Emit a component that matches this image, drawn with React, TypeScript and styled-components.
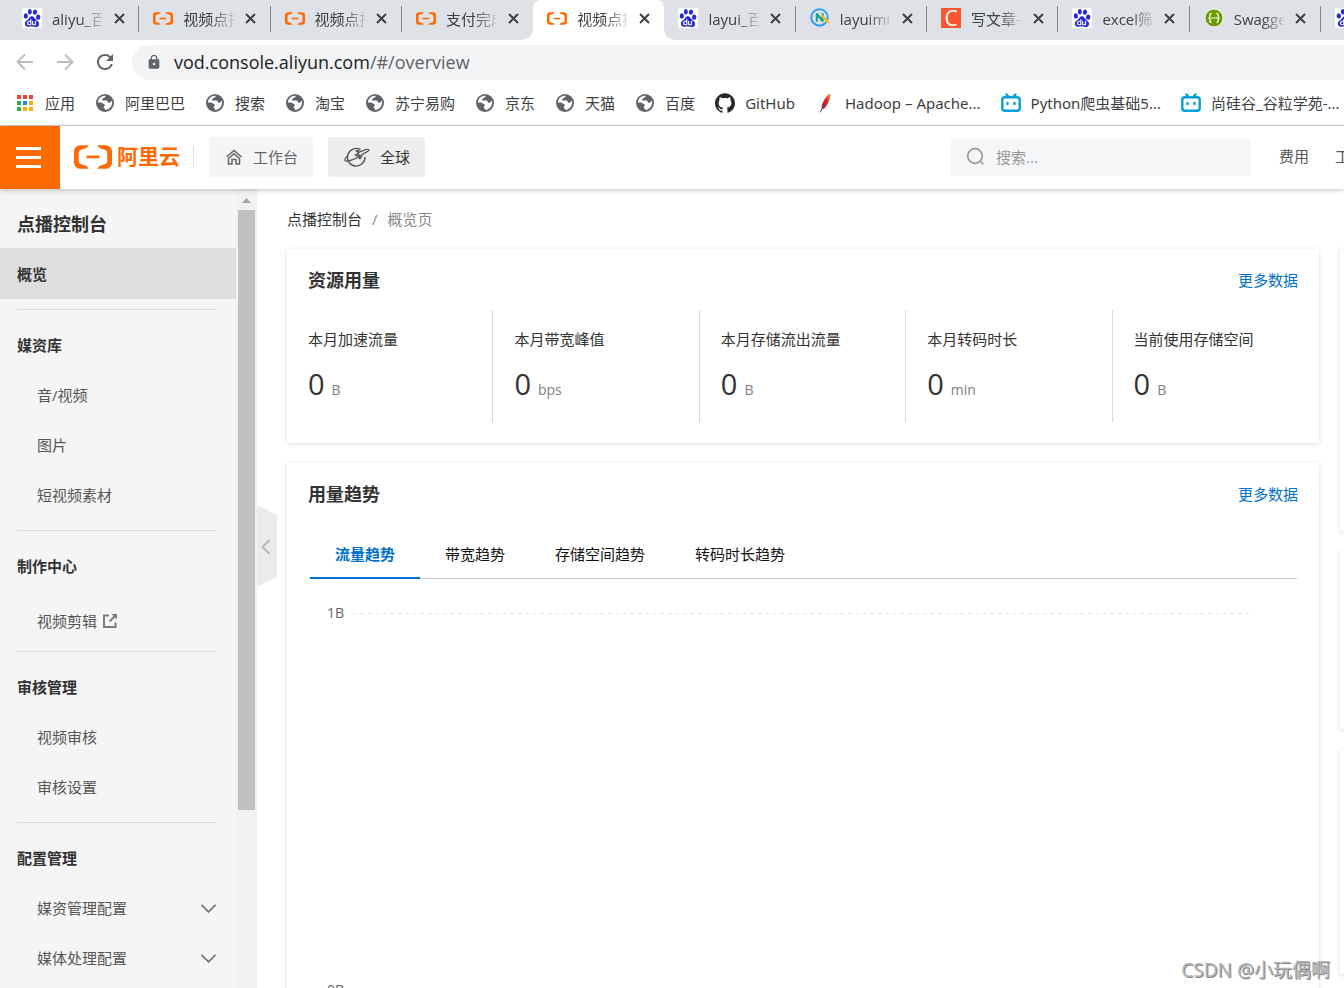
import React from 'react';
import styled, { createGlobalStyle, css } from 'styled-components';
import { MdLock, MdRefresh } from 'react-icons/md';
import { SiBaidu, SiGithub } from 'react-icons/si';

const sans = '"Open Sans", "Noto Sans CJK SC", sans-serif';
const wideSans = '"Noto Sans", "Noto Sans CJK SC", sans-serif';
const orange = '#ff6a00';

const GlobalStyle = createGlobalStyle`
  *, *::before, *::after { box-sizing: border-box; }
  body { margin: 0; background: #fff; color: #333; font-family: ${sans}; font-size: 15px; line-height: 20px; }
  button, input { font: inherit; color: inherit; border: 0; padding: 0; background: none; }
  button { cursor: pointer; }
  a { color: inherit; text-decoration: none; }
  ul { list-style: none; margin: 0; padding: 0; }
  h1, h2, h3, p { margin: 0; font-size: inherit; }
  svg { display: block; flex: none; }
`;

/* ---------- shell ---------- */

const Shell = styled.div`
  position: relative;
  display: flex;
  flex-direction: column;
  height: 100vh;
  overflow: hidden;
`;

const Workspace = styled.div`
  display: flex;
  flex: 1;
  min-height: 0;
`;

/* ---------- browser frame ---------- */

const TabStrip = styled.div`
  display: flex;
  height: 40px;
  padding-left: 8px;
  background: #dee1e6;
  overflow: hidden;
`;

const flare = css`
  content: '';
  position: absolute;
  bottom: 0;
  width: 10px;
  height: 10px;
`;

const BrowserTab = styled.div<{ $active?: boolean; $divided?: boolean; $stub?: boolean }>`
  position: relative;
  display: flex;
  align-items: center;
  gap: 10px;
  flex: ${p => (p.$stub ? '0 0 23px' : '1 1 0')};
  min-width: 0;
  height: 40px;
  padding: ${p => (p.$stub ? '0 0 4px 14px' : '0 13px 4px 14px')};
  color: #3c4043;
  ${p => p.$divided && css`
    background: linear-gradient(#85888d, #85888d) right 6px / 1px 26px no-repeat;
  `}
  ${p => p.$active && css`
    background: #fff;
    border-radius: 8px 8px 0 0;
    &::before { ${flare} left: -10px; background: radial-gradient(circle at 0 0, transparent 9px, #fff 10px); }
    &::after { ${flare} right: -10px; background: radial-gradient(circle at 100% 0, transparent 9px, #fff 10px); }
  `}
`;

const TabTitle = styled.span`
  flex: 1;
  min-width: 0;
  overflow: hidden;
  white-space: nowrap;
  padding-top: 2px;
  mask-image: linear-gradient(to right, #000 28px, transparent 54px);
`;

const CloseButton = styled.button`
  display: flex;
  align-items: center;
  justify-content: center;
  width: 14px;
  height: 20px;
  color: #3c4043;
`;

const IconSlot = styled.span`
  display: flex;
  align-items: center;
  justify-content: center;
  flex: none;
  width: 20px;
  height: 20px;
`;

const BaiduTile = styled(IconSlot)`
  border-radius: 2px;
  background: #fff;
  color: #2529d8;
`;

const LetterTile = styled(IconSlot)`
  background: #fc5531;
  color: #fff;
  font-size: 21px;
`;

const Toolbar = styled.div`
  display: flex;
  align-items: center;
  height: 44px;
  padding-left: 15px;
`;

const ToolButton = styled.button<{ $muted?: boolean }>`
  display: flex;
  align-items: center;
  justify-content: center;
  width: 20px;
  height: 32px;
  margin-right: 20px;
  color: ${p => (p.$muted ? '#babcbe' : '#5f6368')};
`;

const AddressBar = styled.div`
  display: flex;
  align-items: center;
  gap: 12px;
  flex: 1;
  height: 35px;
  margin-left: -3px;
  padding-left: 14px;
  border-radius: 18px 0 0 18px;
  background: #f1f3f4;
  color: #5f6368;
`;

const Address = styled.p`
  font-size: 18px;
  line-height: 26px;
  strong { font-weight: 400; color: #202124; }
`;

const BookmarkBar = styled.nav`
  display: flex;
  align-items: center;
  gap: 20px;
  height: 42px;
  padding: 0 0 3px 15px;
  border-bottom: 1px solid #d6d6d6;
  font-family: ${wideSans};
  overflow: hidden;
`;

const Bookmark = styled.a`
  display: flex;
  align-items: center;
  gap: 10px;
  flex: none;
  color: #3c4043;
  white-space: nowrap;
`;

/* ---------- console header ---------- */

const Header = styled.header`
  position: relative;
  z-index: 2;
  display: flex;
  align-items: center;
  flex: none;
  height: 63px;
  padding-bottom: 1px;
  background: #fff;
  box-shadow: 0 1px 5px rgba(0, 0, 0, 0.25);
`;

const MenuButton = styled.button`
  display: flex;
  flex-direction: column;
  align-items: center;
  justify-content: center;
  gap: 6px;
  width: 60px;
  height: 63px;
  margin-bottom: -1px;
  padding-right: 3px;
  background: ${orange};
`;

const MenuBar = styled.span`
  width: 25px;
  height: 3px;
  background: #fff;
`;

const Brand = styled.a`
  display: flex;
  align-items: center;
  gap: 5px;
  height: 22px;
  margin-left: 14px;
  padding-right: 13px;
  border-right: 1px solid #dedede;
  color: ${orange};
  font-size: 21px;
  font-weight: 700;
  line-height: 20px;
`;

const BrandName = styled.span`
  height: 22px;
`;

const HeaderButton = styled.button<{ $strong?: boolean }>`
  display: flex;
  align-items: center;
  gap: 9px;
  height: 40px;
  margin-left: 15px;
  padding: 0 15px;
  border-radius: 3px;
  background: ${p => (p.$strong ? '#ededed' : '#f4f5f7')};
  color: ${p => (p.$strong ? '#333' : '#666')};
`;

const SearchBox = styled.label`
  display: flex;
  align-items: center;
  gap: 10px;
  width: 300px;
  height: 37px;
  margin-left: auto;
  padding-left: 15px;
  background: #f4f6f7;
  color: #999;
`;

const SearchInput = styled.input`
  flex: 1;
  min-width: 0;
  outline: none;
  &::placeholder { color: #999; opacity: 1; }
`;

const HeaderLinks = styled.nav`
  display: flex;
  gap: 26px;
  width: 93px;
  padding: 0 0 2px 28px;
  overflow: hidden;
  white-space: nowrap;
  color: #555;
`;

/* ---------- sidebar ---------- */

const Sidebar = styled.aside`
  position: relative;
  display: flex;
  flex: none;
  width: 257px;
  background: #f5f5f5;
`;

const SideNav = styled.nav`
  flex: 1;
  overflow: hidden;
`;

const SideTitle = styled.h1`
  height: 59px;
  padding: 23px 17px 0;
  font-size: 18px;
  line-height: 24px;
`;

const SideCurrent = styled.a`
  display: block;
  height: 51px;
  margin-bottom: 10px;
  padding: 0 17px;
  background: #dedede;
  font-weight: 700;
  line-height: 52px;
`;

const SideGroup = styled.section`
  margin: 0 20px 0 17px;
  padding: 10px 0;
  border-top: 1px solid #dedede;
`;

const SideHeading = styled.h2`
  font-weight: 700;
  line-height: 50px;
`;

const SideItem = styled.a<{ $external?: boolean }>`
  display: flex;
  align-items: center;
  justify-content: ${p => (p.$external ? 'flex-start' : 'space-between')};
  gap: 6px;
  height: 50px;
  padding: ${p => (p.$external ? '10px 0 0 20px' : '0 0 0 20px')};
  color: #555;
`;

const ScrollTrack = styled.div`
  display: flex;
  flex-direction: column;
  align-items: center;
  width: 21px;
  padding-top: 9px;
  background: #f1f1f1;
`;

const ScrollThumb = styled.div`
  width: 17px;
  height: 76%;
  margin-top: 7px;
  background: #c1c1c1;
`;

const CollapseHandle = styled.button`
  position: absolute;
  z-index: 1;
  left: 100%;
  top: 316px;
  display: flex;
  align-items: center;
  padding: 2px 0 0 4px;
  width: 20px;
  height: 82px;
  background: #ebebeb;
  color: #b5b5b5;
  clip-path: polygon(0 0, 100% 10px, 100% 72px, 0 100%);
`;

/* ---------- content ---------- */

const Main = styled.main`
  flex: 1;
  min-width: 0;
  padding: 20px 0 0 30px;
  overflow: hidden;
`;

const Breadcrumb = styled.nav`
  display: flex;
  gap: 10px;
  margin-bottom: 20px;
  color: #888;
  a { color: #333; }
`;

const Columns = styled.div`
  display: grid;
  grid-template-columns: minmax(0, 1fr) 4px;
  gap: 21px;
`;

const Stack = styled.div`
  display: flex;
  flex-direction: column;
  gap: 20px;
`;

const Card = styled.section`
  background: #fff;
  box-shadow: 0 1px 5px rgba(0, 0, 0, 0.14);
`;

const SideCard = styled(Card)<{ $height: number }>`
  width: 300px;
  height: ${p => p.$height}px;
`;

const CardHead = styled.div`
  display: flex;
  align-items: center;
  justify-content: space-between;
  height: 61px;
  padding: 0 21px;
`;

const CardTitle = styled.h2`
  font-size: 18px;
  line-height: 24px;
`;

const MoreLink = styled.a`
  color: #0070cc;
`;

const Stats = styled.div`
  display: grid;
  grid-template-columns: repeat(5, minmax(0, 1fr));
  padding-bottom: 21px;
`;

const Stat = styled.div`
  height: 112px;
  padding: 19px 0 0 21px;
  &:not(:last-child) { border-right: 1px solid #d9d9d9; }
`;

const StatValue = styled.p`
  display: flex;
  align-items: baseline;
  gap: 7px;
  margin-top: 17px;
  font-size: 29px;
  line-height: 36px;
`;

const Unit = styled.span`
  font-size: 14px;
  color: #808080;
`;

const TrendTabs = styled.div`
  display: flex;
  margin: 7px 22px 0;
  padding-left: 1px;
  border-bottom: 1px solid #c8c8c8;
`;

const TrendTab = styled.button<{ $active?: boolean }>`
  height: 48px;
  margin-bottom: -1px;
  padding: 0 25px;
  border-bottom: 2px solid ${p => (p.$active ? '#0070cc' : 'transparent')};
  color: ${p => (p.$active ? '#0070cc' : '#111')};
  font-weight: ${p => (p.$active ? 700 : 400)};
`;

const Chart = styled.div`
  display: flex;
  flex-direction: column;
  gap: 357px;
  padding: 24px 69px 20px 40px;
`;

const ChartRow = styled.div`
  display: flex;
  align-items: center;
  gap: 9px;
  color: #666;
  font-size: 14px;
`;

const GridLine = styled.svg`
  flex: 1;
  min-width: 0;
  height: 1px;
`;

const Watermark = styled.p`
  position: absolute;
  z-index: 3;
  right: 14px;
  bottom: 6px;
  color: #b4b4b4;
  font-family: ${wideSans};
  font-size: 19px;
  line-height: 24px;
  text-shadow: 1px 1px 0 #858585;
`;

/* ---------- icons ---------- */

const AliyunMark = ({ width }: { width: number }) => (
  <svg width={width} height={Math.round(width * 0.625)} viewBox="0 4.5 24 15" fill={orange}>
    <path d="M3.996 4.517h5.291L8.01 6.324 4.153 7.506a1.668 1.668 0 0 0-1.165 1.601v5.786a1.668 1.668 0 0 0 1.165 1.6l3.857 1.183 1.277 1.807H3.996A3.996 3.996 0 0 1 0 15.487V8.513a3.996 3.996 0 0 1 3.996-3.996m16.008 0h-5.291l1.272 1.807 3.857 1.182c.715.227 1.17.889 1.165 1.601v5.786a1.668 1.668 0 0 1-1.165 1.6l-3.857 1.183-1.272 1.807h5.291A3.996 3.996 0 0 0 24 15.487V8.513a3.996 3.996 0 0 0-3.996-3.996m-4.007 8.345H8.002v-1.804h7.995Z" />
  </svg>
);

const CloseIcon = () => (
  <svg width="11" height="11" viewBox="0 0 11 11" stroke="currentColor" strokeWidth="2">
    <path d="M1 1l9 9M10 1l-9 9" />
  </svg>
);

const LayuiIcon = () => (
  <svg width="20" height="20" viewBox="0 0 19 19" fill="none">
    <circle cx="9" cy="9" r="7.8" stroke="#2e9df7" strokeWidth="1.8" />
    <path d="M5.500 13V5h2l3.500 4.500V5h2v8h-2L7.500 8.500V13z" fill="#17a58c" />
    <path d="M10 4.500l9 9.500-3 .5-4-5z" fill="#fbb917" />
  </svg>
);

const SwaggerIcon = () => (
  <svg width="20" height="20" viewBox="0 0 20 20" fill="none">
    <circle cx="10" cy="10" r="9" fill="#6d9a00" stroke="#f3f7e8" strokeWidth="1" />
    <path d="M7.500 5.500c-2 0-1.500 1-1.500 2.500S5.500 10 4.500 10c1 0 1.500.5 1.500 2s-.5 2.500 1.500 2.500M12.500 5.500c2 0 1.500 1 1.500 2.500s.5 2 1.500 2c-1 0-1.500.5-1.500 2s.5 2.500-1.500 2.500" stroke="#fff" strokeWidth="1.300" />
    <path d="M7.300 10h1.400M9.400 10h1.400M11.500 10h1.400" stroke="#fff" strokeWidth="1.400" />
  </svg>
);

const BackIcon = ({ flip }: { flip?: boolean }) => (
  <svg width="18" height="18" viewBox="0 0 18 18" fill="none" stroke="currentColor" strokeWidth="2">
    <path d={flip ? 'M1 9h15M9 1.500L16.500 9 9 16.500' : 'M17 9H2M9 1.500L1.500 9 9 16.500'} />
  </svg>
);

const AppsIcon = () => {
  const colors = ['#ea4335', '#ea4335', '#ea4335', '#34a853', '#1a8cff', '#fbaf00', '#34a853', '#fbaf00', '#fbaf00'];
  return (
    <svg width="18" height="18" viewBox="0 0 18 18">
      {colors.map((c, i) => (
        <rect key={i} x={1 + (i % 3) * 6} y={1 + Math.floor(i / 3) * 6} width="4" height="4" fill={c} />
      ))}
    </svg>
  );
};

const GlobeIcon = () => (
  <svg width="18" height="18" viewBox="0 0 18 18">
    <circle cx="9" cy="9" r="9" fill="#5f6368" />
    <path d="M1.800 8.500c.2-2.500 1.700-4.800 4-6 1-.5 2.600-.9 4-.8-.2 1.200-.8 1.800-2 2.100-.7.200-.7 1.200-1.400 1.500-.5.300-.4.900 0 1.200h3.800c1.300.2 1.700 1.100 1.800 2 .8.500 2.300.3 2.600-.6.200-.7.900-1 1.500-.8.400 2.500-.5 5.100-2.300 6.900-1.300 1.200-3 1.900-4.800 2 .1-1.100-.2-1.700-1-2.100-.6-.4-.3-1.400.3-1.900.8-.6.800-1.300-.1-1.700C6.700 9.700 6.600 8.700 5 8.600c-1-.1-2.200 0-3.200-.1z" fill="#fff" />
    <path d="M10.200 1.800c.8 1.100 2.400.9 2.300 2.500 0 1-.9 1.100-.8 2 .1 1.200 1.300 1.800 2.300 1.200l2.300-1.200C15.600 3.800 13.200 2 10.200 1.800z" fill="#5f6368" />
  </svg>
);

const FeatherIcon = () => (
  <svg width="18" height="20" viewBox="0 0 18 20">
    <defs>
      <linearGradient id="feather" x1="1" y1="0" x2="0" y2="1">
        <stop offset="0" stopColor="#f69923" />
        <stop offset="0.4" stopColor="#d22128" />
        <stop offset="1" stopColor="#6d2c91" />
      </linearGradient>
    </defs>
    <path d="M13 1c1.500 0 1.700 1.600 1 4-1 3.500-3 7.500-5.500 10.500L6.500 16l-2 3.500-.7-.3L5.700 15c-.4-2 .6-5.200 2.800-8.500C10.500 3.500 12 1.500 13 1z" fill="url(#feather)" />
  </svg>
);

const BiliIcon = () => (
  <svg width="20" height="20" viewBox="0 0 20 20" fill="none" stroke="#00a1d6" strokeWidth="2.400" strokeLinecap="round">
    <path d="M5.500 1.500l2.300 2.500M14.500 1.500l-2.300 2.500" />
    <rect x="1.300" y="4.300" width="17.400" height="13.500" rx="2.500" />
    <path d="M6.500 10v1M13.500 10v1" />
  </svg>
);

const HomeIcon = () => (
  <svg width="18" height="16" viewBox="0 0 18 16" fill="none" stroke="currentColor" strokeWidth="1.500">
    <path d="M1.500 8L9 1.500 16.500 8" />
    <path d="M3.500 9.500L9 4.800l5.500 4.700V15H11v-4.500H7V15H3.500z" />
  </svg>
);

const PlanetIcon = () => (
  <svg width="28" height="22" viewBox="0 0 28 22" fill="none" stroke="#555" strokeWidth="1.300">
    <path d="M17.500 3.600A8.800 8.800 0 1 0 22 11" />
    <path d="M5.200 9.200C2.500 11.800 1.300 13.500 2 14.500c1.500 1.700 10-1.200 16-5" />
    <path d="M14 4.300l4.500 1.300 2.800-1.600c1.700-.8 4.200-.9 4.700-.1-.2 1.300-2.500 2.200-4 2.900l-2.500 1.500-2 4-1.300.2.500-3.500-3.500.7-.8-.6 3.600-2.300-2.800-1.700z" />
  </svg>
);

const SearchIcon = () => (
  <svg width="20" height="20" viewBox="0 0 20 20" fill="none" stroke="currentColor" strokeWidth="1.700">
    <circle cx="9" cy="9" r="7.300" />
    <path d="M14 14l3.300 3.500" />
  </svg>
);

const ExternalIcon = () => (
  <svg width="14" height="14" viewBox="0 0 14 14" fill="none" stroke="#7d7d7d" strokeWidth="2">
    <path d="M6 1.500H1V13h11.500V8.500M6.500 7.500L12 2" />
    <path d="M8.500 0H14v5.500z" fill="#7d7d7d" stroke="none" />
  </svg>
);

const ChevronDown = () => (
  <svg width="15" height="9" viewBox="0 0 15 9" fill="none" stroke="#6e6e6e" strokeWidth="1.600">
    <path d="M.5.800l7 7 7-7" />
  </svg>
);

const ChevronLeft = () => (
  <svg width="10" height="16" viewBox="0 0 10 16" fill="none" stroke="currentColor" strokeWidth="1.800">
    <path d="M8.500 1L1.500 8l7 7" />
  </svg>
);

const BaiduIcon = () => <BaiduTile><SiBaidu size={18} /></BaiduTile>;

/* ---------- data ---------- */

const tabs: { icon: React.ReactNode; title: string; active?: boolean; divided?: boolean }[] = [
  { icon: <BaiduIcon />, title: 'aliyu_百', divided: true },
  { icon: <AliyunMark width={20} />, title: '视频点播', divided: true },
  { icon: <AliyunMark width={20} />, title: '视频点播', divided: true },
  { icon: <AliyunMark width={20} />, title: '支付完成' },
  { icon: <AliyunMark width={20} />, title: '视频点播', active: true },
  { icon: <BaiduIcon />, title: 'layui_百', divided: true },
  { icon: <IconSlot><LayuiIcon /></IconSlot>, title: 'layuimini', divided: true },
  { icon: <LetterTile>C</LetterTile>, title: '写文章-', divided: true },
  { icon: <BaiduIcon />, title: 'excel筛', divided: true },
  { icon: <SwaggerIcon />, title: 'Swagger', divided: true },
];

const bookmarks: { icon: React.ReactNode; label: string }[] = [
  { icon: <AppsIcon />, label: '应用' },
  ...['阿里巴巴', '搜索', '淘宝', '苏宁易购', '京东', '天猫', '百度'].map(label => ({ icon: <GlobeIcon />, label })),
  { icon: <SiGithub size={20} color="#24292e" />, label: 'GitHub' },
  { icon: <FeatherIcon />, label: 'Hadoop – Apache...' },
  { icon: <BiliIcon />, label: 'Python爬虫基础5...' },
  { icon: <BiliIcon />, label: '尚硅谷_谷粒学苑-...' },
];

const groups: { heading: string; items: { label: string; external?: boolean; expandable?: boolean }[] }[] = [
  { heading: '媒资库', items: [{ label: '音/视频' }, { label: '图片' }, { label: '短视频素材' }] },
  { heading: '制作中心', items: [{ label: '视频剪辑', external: true }] },
  { heading: '审核管理', items: [{ label: '视频审核' }, { label: '审核设置' }] },
  { heading: '配置管理', items: [{ label: '媒资管理配置', expandable: true }, { label: '媒体处理配置', expandable: true }] },
];

const stats = [
  { label: '本月加速流量', unit: 'B' },
  { label: '本月带宽峰值', unit: 'bps' },
  { label: '本月存储流出流量', unit: 'B' },
  { label: '本月转码时长', unit: 'min' },
  { label: '当前使用存储空间', unit: 'B' },
];

const trends = ['流量趋势', '带宽趋势', '存储空间趋势', '转码时长趋势'];

/* ---------- page ---------- */

export default function App() {
  return (
    <Shell>
      <GlobalStyle />
      <TabStrip>
        {tabs.map((t, i) => (
          <BrowserTab key={i} $active={t.active} $divided={t.divided}>
            {t.icon}
            <TabTitle>{t.title}</TabTitle>
            <CloseButton aria-label="关闭"><CloseIcon /></CloseButton>
          </BrowserTab>
        ))}
        <BrowserTab $stub><BaiduIcon /></BrowserTab>
      </TabStrip>
      <Toolbar>
        <ToolButton $muted aria-label="后退"><BackIcon /></ToolButton>
        <ToolButton $muted aria-label="前进"><BackIcon flip /></ToolButton>
        <ToolButton aria-label="刷新"><MdRefresh size={24} /></ToolButton>
        <AddressBar>
          <MdLock size={16} />
          <Address><strong>vod.console.aliyun.com</strong>/#/overview</Address>
        </AddressBar>
      </Toolbar>
      <BookmarkBar>
        {bookmarks.map(b => (
          <Bookmark key={b.label} href="#"><IconSlot>{b.icon}</IconSlot>{b.label}</Bookmark>
        ))}
      </BookmarkBar>

      <Header>
        <MenuButton aria-label="菜单"><MenuBar /><MenuBar /><MenuBar /></MenuButton>
        <Brand href="#"><AliyunMark width={38} /><BrandName>阿里云</BrandName></Brand>
        <HeaderButton><IconSlot><HomeIcon /></IconSlot>工作台</HeaderButton>
        <HeaderButton $strong><PlanetIcon />全球</HeaderButton>
        <SearchBox>
          <SearchIcon />
          <SearchInput type="text" placeholder="搜索..." aria-label="搜索" />
        </SearchBox>
        <HeaderLinks><a href="#">费用</a><a href="#">工单</a></HeaderLinks>
      </Header>

      <Workspace>
        <Sidebar>
          <SideNav>
            <SideTitle>点播控制台</SideTitle>
            <SideCurrent href="#">概览</SideCurrent>
            {groups.map(g => (
              <SideGroup key={g.heading}>
                <SideHeading>{g.heading}</SideHeading>
                <ul>
                  {g.items.map(item => (
                    <li key={item.label}>
                      <SideItem href="#" $external={item.external}>
                        {item.label}
                        {item.external && <ExternalIcon />}
                        {item.expandable && <ChevronDown />}
                      </SideItem>
                    </li>
                  ))}
                </ul>
              </SideGroup>
            ))}
          </SideNav>
          <ScrollTrack>
            <svg width="9" height="5" viewBox="0 0 9 5" fill="#a3a3a3"><path d="M0 5L4.500 0 9 5z" /></svg>
            <ScrollThumb />
          </ScrollTrack>
          <CollapseHandle aria-label="收起"><ChevronLeft /></CollapseHandle>
        </Sidebar>

        <Main>
          <Breadcrumb><a href="#">点播控制台</a><span>/</span><span>概览页</span></Breadcrumb>
          <Columns>
            <Stack>
              <Card>
                <CardHead><CardTitle>资源用量</CardTitle><MoreLink href="#">更多数据</MoreLink></CardHead>
                <Stats>
                  {stats.map(s => (
                    <Stat key={s.label}>
                      <p>{s.label}</p>
                      <StatValue>0<Unit>{s.unit}</Unit></StatValue>
                    </Stat>
                  ))}
                </Stats>
              </Card>
              <Card>
                <CardHead><CardTitle>用量趋势</CardTitle><MoreLink href="#">更多数据</MoreLink></CardHead>
                <TrendTabs role="tablist">
                  {trends.map((t, i) => (
                    <TrendTab key={t} role="tab" aria-selected={i === 0} $active={i === 0}>{t}</TrendTab>
                  ))}
                </TrendTabs>
                <Chart>
                  {['1B', '0B'].map(v => (
                    <ChartRow key={v}>
                      {v}
                      <GridLine><line x1="0" x2="100%" y1="0.5" y2="0.5" stroke="#e3e3e3" strokeDasharray="4 3 4 4" /></GridLine>
                    </ChartRow>
                  ))}
                </Chart>
              </Card>
            </Stack>
            <Stack>
              <SideCard $height={282} />
              <SideCard $height={178} />
              <SideCard $height={225} />
            </Stack>
          </Columns>
        </Main>
      </Workspace>
      <Watermark>CSDN @小玩偶啊</Watermark>
    </Shell>
  );
}
